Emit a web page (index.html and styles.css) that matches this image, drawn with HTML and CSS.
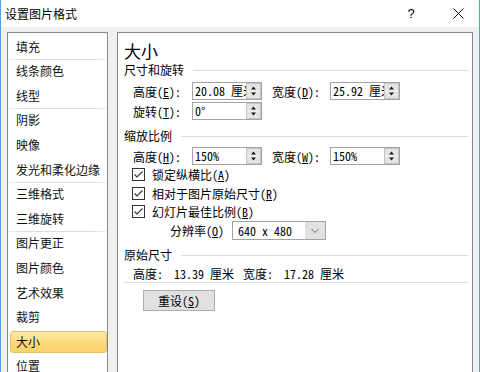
FILE: index.html
```html
<!DOCTYPE html>
<html lang="zh-CN">
<head>
<meta charset="utf-8">
<title>设置图片格式</title>
<link rel="stylesheet" href="styles.css">
</head>
<body>
<div class="window">
  <div class="titlebar">
    <span class="title">设置图片格式</span>
    <span class="help">?</span>
    <span class="close"><svg width="11" height="11" viewBox="0 0 11 11"><path d="M0.5 0.5 L10.5 10.5 M10.5 0.5 L0.5 10.5" stroke="#111" stroke-width="1" fill="none"/></svg></span>
  </div>
  <div class="body">
    <ul class="nav">
      <li class="sep">填充</li>
      <li>线条颜色</li>
      <li class="sep">线型</li>
      <li>阴影</li>
      <li>映像</li>
      <li class="sep">发光和柔化边缘</li>
      <li>三维格式</li>
      <li class="sep">三维旋转</li>
      <li>图片更正</li>
      <li>图片颜色</li>
      <li>艺术效果</li>
      <li>裁剪</li>
      <li class="sel">大小</li>
      <li>位置</li>
    </ul>
    <div class="pane">
      <h1 class="heading">大小</h1>
      <div class="sec"><span>尺寸和旋转</span></div>
      <div class="row first">
        <span class="lbl">高度(<u>E</u>):</span>
        <span class="spin"><span class="val">20.08 厘米</span><span class="btn"><svg width="15" height="16" viewBox="0 0 15 16"><rect x="0.5" y="0.5" width="14" height="15" fill="#e4e4e4" stroke="#c4c4c4"/><line x1="1" y1="8" x2="14" y2="8" stroke="#f6f6f6"/><path d="M5 6.5 H10 L7.5 3.5 Z M5 9.5 H10 L7.5 12.5 Z" fill="#1a1a1a"/></svg></span></span>
        <span class="lbl lbl2">宽度(<u>D</u>):</span>
        <span class="spin"><span class="val">25.92 厘米</span><span class="btn"><svg width="15" height="16" viewBox="0 0 15 16"><rect x="0.5" y="0.5" width="14" height="15" fill="#e4e4e4" stroke="#c4c4c4"/><line x1="1" y1="8" x2="14" y2="8" stroke="#f6f6f6"/><path d="M5 6.5 H10 L7.5 3.5 Z M5 9.5 H10 L7.5 12.5 Z" fill="#1a1a1a"/></svg></span></span>
      </div>
      <div class="row next">
        <span class="lbl">旋转(<u>T</u>):</span>
        <span class="spin"><span class="val">0°</span><span class="btn"><svg width="15" height="16" viewBox="0 0 15 16"><rect x="0.5" y="0.5" width="14" height="15" fill="#e4e4e4" stroke="#c4c4c4"/><line x1="1" y1="8" x2="14" y2="8" stroke="#f6f6f6"/><path d="M5 6.5 H10 L7.5 3.5 Z M5 9.5 H10 L7.5 12.5 Z" fill="#1a1a1a"/></svg></span></span>
      </div>
      <div class="sec sec2"><span>缩放比例</span></div>
      <div class="row scale">
        <span class="lbl">高度(<u>H</u>):</span>
        <span class="spin"><span class="val">150%</span><span class="btn"><svg width="15" height="16" viewBox="0 0 15 16"><rect x="0.5" y="0.5" width="14" height="15" fill="#e4e4e4" stroke="#c4c4c4"/><line x1="1" y1="8" x2="14" y2="8" stroke="#f6f6f6"/><path d="M5 6.5 H10 L7.5 3.5 Z M5 9.5 H10 L7.5 12.5 Z" fill="#1a1a1a"/></svg></span></span>
        <span class="lbl lbl2">宽度(<u>W</u>):</span>
        <span class="spin"><span class="val">150%</span><span class="btn"><svg width="15" height="16" viewBox="0 0 15 16"><rect x="0.5" y="0.5" width="14" height="15" fill="#e4e4e4" stroke="#c4c4c4"/><line x1="1" y1="8" x2="14" y2="8" stroke="#f6f6f6"/><path d="M5 6.5 H10 L7.5 3.5 Z M5 9.5 H10 L7.5 12.5 Z" fill="#1a1a1a"/></svg></span></span>
      </div>
      <div class="chk"><svg width="13" height="13" viewBox="0 0 13 13"><rect x="0.5" y="0.5" width="12" height="12" fill="#fff" stroke="#333"/><path d="M2.5 6.5 L5 9 L10.5 3.5" stroke="#333" stroke-width="1.1" fill="none"/></svg><span>锁定纵横比(<u>A</u>)</span></div>
      <div class="chk"><svg width="13" height="13" viewBox="0 0 13 13"><rect x="0.5" y="0.5" width="12" height="12" fill="#fff" stroke="#333"/><path d="M2.5 6.5 L5 9 L10.5 3.5" stroke="#333" stroke-width="1.1" fill="none"/></svg><span>相对于图片原始尺寸(<u>R</u>)</span></div>
      <div class="chk"><svg width="13" height="13" viewBox="0 0 13 13"><rect x="0.5" y="0.5" width="12" height="12" fill="#fff" stroke="#333"/><path d="M2.5 6.5 L5 9 L10.5 3.5" stroke="#333" stroke-width="1.1" fill="none"/></svg><span>幻灯片最佳比例(<u>B</u>)</span></div>
      <div class="res">
        <span class="lbl3">分辨率(<u>O</u>)</span>
        <span class="dd"><span class="v">640 x 480</span><span class="arrow"><svg width="20" height="17" viewBox="0 0 20 17"><rect x="0" y="0" width="20" height="17" fill="#e1e1e1"/><path d="M6.5 7 L10 10.5 L13.5 7" stroke="#6a6a6a" fill="none"/></svg></span></span>
      </div>
      <div class="sec sec3"><span>原始尺寸</span></div>
      <div class="orig"><span>高度:</span><span class="n1">13.39 厘米</span><span class="w">宽度:</span><span class="n2">17.28 厘米</span></div>
      <button class="reset" type="button">重设(<u>S</u>)</button>
    </div>
  </div>
</div>
</body>
</html>
```
FILE: styles.css
```css
* { box-sizing: border-box; }
html, body { margin: 0; padding: 0; }
body {
  width: 480px;
  height: 372px;
  overflow: hidden;
  font-family: "Noto Sans Mono CJK SC", "Noto Sans CJK SC", sans-serif;
  font-size: 12px;
  color: #000;
  background: #f0f0f0;
}
.window {
  width: 480px;
  height: 372px;
  border-left: 1px solid #4da3e6;
  border-right: 1px solid #4da3e6;
  background: #f0f0f0;
  display: flex;
  flex-direction: column;
  overflow: hidden;
}
.titlebar {
  flex: none;
  height: 27px;
  background: #fff;
  display: flex;
  align-items: center;
  padding: 0 4px 0 4px;
}
.title {
  flex: 1;
  font-family: "Noto Sans CJK SC", sans-serif;
  font-size: 12px;
}
.help {
  width: 30px;
  margin-right: 15px;
  text-align: center;
  font-family: "Liberation Sans", sans-serif;
  font-size: 13px;
}
.close {
  width: 34px;
  display: flex;
  justify-content: center;
  align-items: center;
}
.body {
  flex: 1;
  display: flex;
  gap: 9px;
  padding: 5px 6px 0 6px;
  min-height: 0;
}
.nav {
  flex: none;
  width: 101px;
  height: 400px;
  margin: 0;
  padding: 2.7px 0 0 2px;
  list-style: none;
  background: #fff;
  border: 1px solid #828790;
  display: flex;
  flex-direction: column;
  gap: 2.6px;
  font-family: "Noto Sans CJK SC", sans-serif;
}
.nav li {
  position: relative;
  flex: none;
  height: 22px;
  line-height: 20px;
  padding-left: 5px;
  border: 1px solid transparent;
  border-radius: 3px;
  white-space: nowrap;
  color: #111;
}
.nav li.sel {
  background: linear-gradient(#fdeaa8, #fbd877 60%, #f9d36c);
  border-color: #e3c36c;
}
.nav li.sep::after {
  content: "";
  position: absolute;
  left: -3px;
  right: -1px;
  bottom: -3px;
  height: 1px;
  background: linear-gradient(to right, #f2f2f2, #dddddd 15%, #dddddd 85%, #f2f2f2);
}
.pane {
  flex: 1;
  height: 400px;
  background: #fff;
  border: 1px solid #828790;
  padding: 0 4px 0 6px;
}
.heading {
  margin: 7px 0 0;
  font-family: "Noto Sans CJK SC", sans-serif;
  font-size: 17px;
  font-weight: normal;
  line-height: 22px;
}
.sec {
  display: flex;
  align-items: center;
  gap: 9px;
  height: 16px;
  line-height: 16px;
  font-family: "Noto Sans CJK SC", sans-serif;
}
.sec::after {
  content: "";
  flex: 1;
  height: 1px;
  background: #dcdcdc;
  margin-top: 1px;
}
.sec2 { margin-top: 8px; }
.sec3 { margin-top: 7px; }
u { text-decoration: underline; text-underline-offset: 1px; }
.row {
  display: flex;
  align-items: center;
  height: 18px;
  padding-left: 9px;
}
.row.first { margin-top: 4px; }
.row.next { margin-top: 2px; }
.row.scale { margin-top: 3px; }
.lbl { width: 59px; flex: none; white-space: nowrap; }
.lbl2 { width: 58px; margin-left: 10px; }
.spin {
  flex: none;
  width: 70px;
  height: 18px;
  border: 1px solid #a3a3a3;
  background: #fff;
  display: flex;
}
.spin .val {
  flex: 1;
  overflow: hidden;
  white-space: nowrap;
  padding-left: 2px;
  line-height: 16px;
}
.spin .btn {
  flex: none;
  width: 15px;
  height: 16px;
  display: flex;
}
.chk {
  display: flex;
  align-items: center;
  gap: 7px;
  height: 18.7px;
  padding-left: 8px;
  white-space: nowrap;
}
.chk svg { flex: none; }
.res {
  display: flex;
  align-items: center;
  height: 19px;
  padding-left: 46px;
}
.lbl3 { width: 62px; flex: none; white-space: nowrap; }
.dd {
  flex: none;
  width: 94px;
  height: 19px;
  border: 1px solid #a3a3a3;
  display: flex;
}
.dd .v {
  flex: 1;
  padding-left: 5px;
  line-height: 17px;
  white-space: nowrap;
}
.dd .arrow { flex: none; width: 20px; height: 17px; display: flex; }
.orig {
  display: flex;
  align-items: center;
  height: 18px;
  margin-top: 2px;
  padding-left: 9px;
  border-bottom: 1px solid #dcdcdc;
  white-space: nowrap;
}
.orig .n1 { margin-left: 11px; }
.orig .w { margin-left: 9px; }
.orig .n2 { margin-left: 11px; }
.reset {
  display: block;
  margin: 7px 0 0 19px;
  width: 72px;
  height: 21px;
  padding: 0;
  background: #e1e1e1;
  border: 1px solid #adadad;
  border-radius: 0;
  font-family: "Noto Sans Mono CJK SC", "Noto Sans CJK SC", sans-serif;
  font-size: 12px;
  line-height: 19px;
  color: #000;
  text-align: center;
}
```
